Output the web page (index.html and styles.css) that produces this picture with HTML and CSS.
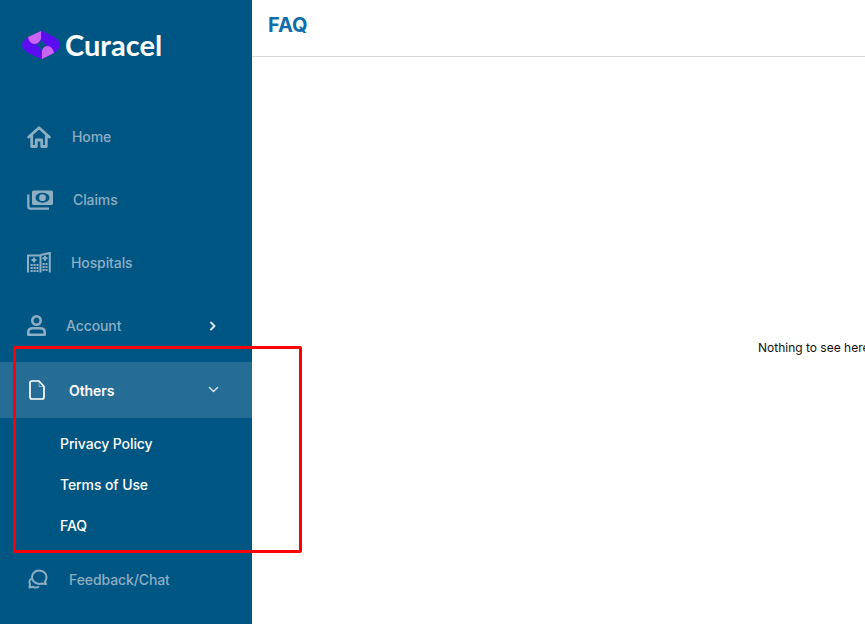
FILE: index.html
```html
<!DOCTYPE html>
<html lang="en">
  <head>
    <meta charset="UTF-8" />
    <meta name="viewport" content="width=device-width, initial-scale=1.0" />
    <title>FAQ - Curacel</title>
    <link rel="stylesheet" href="styles.css">
  </head>
  <body>
    <aside class="sidebar">
      <div class="logo">
        <svg class="logo-mark" width="38" height="28" viewBox="0 0 38 28">
          <path fill="#5b0cf0" d="M19 0 L6 6 Q0 10 0 14 Q0 18 6 22 L19 28 V21 Q19 15 13 14 Q19 13 19 7 Z" />
          <path fill="#5b0cf0" d="M20 28 L32 22 Q38 18 38 14 Q38 10 32 6 L20 0 V7 Q20 13 26 14 Q20 15 20 21 Z" />
          <path fill="#c965f2" d="M19 0 L6 6 Q7 12 12 13 Q17 13 19 8 Z" />
          <path fill="#c965f2" d="M20 28 L32 22 Q31 16 26 15 Q21 15 20 20 Z" />
        </svg>
        <span class="logo-text">Curacel</span>
      </div>

      <nav class="nav">
        <a class="nav-item nav-home">
          <svg class="icon" width="24" height="22" viewBox="0 0 24 22" fill="none" stroke="currentColor" stroke-width="2.800" stroke-linejoin="round" stroke-linecap="round">
            <path d="M1.700 11 L12 1.800 L22.300 11" />
            <path d="M4.700 9.500 V20.500 H9.300 V14 H14.700 V20.500 H19.300 V9.500" />
          </svg>
          <span>Home</span>
        </a>
        <a class="nav-item nav-claims">
          <svg class="icon" width="26" height="20" viewBox="0 0 26 20">
            <rect x="5" y="0.500" width="21" height="14.500" rx="1.500" fill="currentColor" />
            <ellipse cx="15.500" cy="7.700" rx="7" ry="5" fill="#005683" />
            <circle cx="15.500" cy="7.700" r="3.400" fill="currentColor" />
            <path d="M1.300 4.500 V16.500 Q1.300 18.700 3.500 18.700 H22" fill="none" stroke="currentColor" stroke-width="2.200" />
          </svg>
          <span>Claims</span>
        </a>
        <a class="nav-item nav-hospitals">
          <svg class="icon" width="24" height="21" viewBox="0 0 24 21" fill="none" stroke="currentColor" stroke-width="2">
            <path d="M1 20.500 V3.500 H13.500 V20.500" />
            <path d="M13.500 3 L22.800 1 V20.500" />
            <path d="M7 5.500 V10.500 M4.500 8 H9.500 M18 3.800 V8.800 M15.500 6.300 H20.500" stroke-width="2" />
            <path d="M3.500 13 H11.500 M3.500 16 H11.500 M3.500 19 H11.500 M15.500 12 H20.500 M15.500 15 H20.500 M15.500 18 H20.500" stroke-width="2.200" stroke-dasharray="2.200 0.800" />
          </svg>
          <span>Hospitals</span>
        </a>
        <a class="nav-item nav-account">
          <svg class="icon" width="19" height="21" viewBox="0 0 19 21" fill="none" stroke="currentColor" stroke-width="2.600">
            <circle cx="9.500" cy="5.500" r="4.200" />
            <path d="M1.300 19.700 V17 Q1.300 13.300 6 13.300 H13 Q17.700 13.300 17.700 17 V19.700 Z" stroke-linejoin="round" />
          </svg>
          <span>Account</span>
          <svg class="chevron" width="8" height="10" viewBox="0 0 8 10" fill="none" stroke="currentColor" stroke-width="2" stroke-linecap="round" stroke-linejoin="round">
            <path d="M2 1.500 L5.500 5 L2 8.500" />
          </svg>
        </a>

        <div class="nav-group">
          <a class="nav-item nav-others active">
            <svg class="icon" width="16" height="20" viewBox="0 0 16 20" fill="none" stroke="currentColor" stroke-width="1.700" stroke-linejoin="round">
              <path d="M3 1 H10 L15 6.500 V17 Q15 19 13 19 H3 Q1 19 1 17 V3 Q1 1 3 1 Z" />
              <path d="M10 1 V6.500 H15" stroke-width="0.800" opacity="0.6" />
            </svg>
            <span>Others</span>
            <svg class="chevron" width="11" height="8" viewBox="0 0 11 8" fill="none" stroke="currentColor" stroke-width="1.500" stroke-linecap="round" stroke-linejoin="round">
              <path d="M1.500 1.500 L5.500 5.500 L9.500 1.500" />
            </svg>
          </a>
          <ul class="subnav">
            <li>Privacy Policy</li>
            <li>Terms of Use</li>
            <li>FAQ</li>
          </ul>
        </div>

        <a class="nav-item nav-feedback">
          <svg class="icon" width="20" height="20" viewBox="0 0 20 20" fill="none" stroke="currentColor" stroke-width="2" stroke-linejoin="round">
            <path d="M11 1.500 C15.500 1.500 18.500 4.500 18.500 8 C18.500 10 18 11.500 17 12.500 L18 15 L14 14.500 C12.500 15 10 15 8.500 14.200 C5.500 13 4 10.500 4 8 C4 4.500 7 1.500 11 1.500 Z" />
            <path d="M3.500 9.500 C1.500 11 1 13.500 2 15 L1.500 18.500 L5 17.800 C7 18.800 9.500 18.500 11 17.500" />
          </svg>
          <span>Feedback/Chat</span>
        </a>
      </nav>
    </aside>

    <main class="content">
      <header class="topbar">
        <h1>FAQ</h1>
      </header>
      <div class="empty">Nothing to see here</div>
    </main>

    <div class="highlight"></div>
  </body>
</html>
```

FILE: styles.css
```css
* {
  margin: 0;
  padding: 0;
  box-sizing: border-box;
}

html,
body {
  height: 100%;
  overflow: hidden;
}

body {
  display: flex;
  font-family: Inter, "Liberation Sans", sans-serif;
  background: #fff;
}

.sidebar {
  width: 252px;
  height: 624px;
  flex-shrink: 0;
  background: #005683;
  color: #8eaec4;
}

.logo {
  display: flex;
  align-items: center;
  gap: 5px;
  height: 90px;
  padding-left: 22px;
}

.logo-text {
  font-family: Lato, sans-serif;
  font-size: 29px;
  font-weight: 700;
  line-height: 28px;
  color: #fff;
}

.nav {
  padding-top: 15px;
  font-size: 14px;
  font-weight: 500;
  letter-spacing: -0.1px;
}

.nav-item {
  display: flex;
  align-items: center;
  height: 63px;
  padding-left: 27px;
}

.nav-item .chevron {
  margin-left: auto;
  color: #d6e3ec;
}

.nav-home span {
  margin-left: 21px;
}

.nav-claims span {
  margin-left: 20px;
}

.nav-hospitals span {
  margin-left: 20px;
}

.nav-account span {
  margin-left: 20px;
}

.nav-account .chevron {
  margin-right: 35px;
}

.nav-others {
  height: 56px;
  margin-top: 5px;
  padding-left: 29px;
  background: #266d96;
  color: #fff;
  font-weight: 600;
}

.nav-others span {
  margin-left: 24px;
}

.nav-others .chevron {
  margin-right: 33px;
}

.subnav {
  list-style: none;
  padding-top: 5px;
  color: #fff;
}

.subnav li {
  display: flex;
  align-items: center;
  height: 41px;
  padding-left: 60px;
}

.nav-feedback {
  height: 54px;
  margin-top: 6px;
  padding-left: 28px;
}

.nav-feedback span {
  margin-left: 21px;
}

.content {
  flex: 1;
  min-width: 0;
}

.topbar {
  display: flex;
  align-items: center;
  height: 57px;
  padding: 0 0 6px 16px;
  border-bottom: 1px solid #d9d9d9;
}

.topbar h1 {
  font-size: 20px;
  font-weight: 700;
  color: #0f6dab;
}

.empty {
  padding: 282px 0 0 506px;
  font-size: 12px;
  line-height: 17px;
  white-space: nowrap;
  color: #111;
}

/* annotation drawn over the screenshot */
.highlight {
  position: absolute;
  left: 13px;
  top: 346px;
  width: 289px;
  height: 207px;
  border: 3px solid #fb0007;
  border-radius: 2px;
}
```
